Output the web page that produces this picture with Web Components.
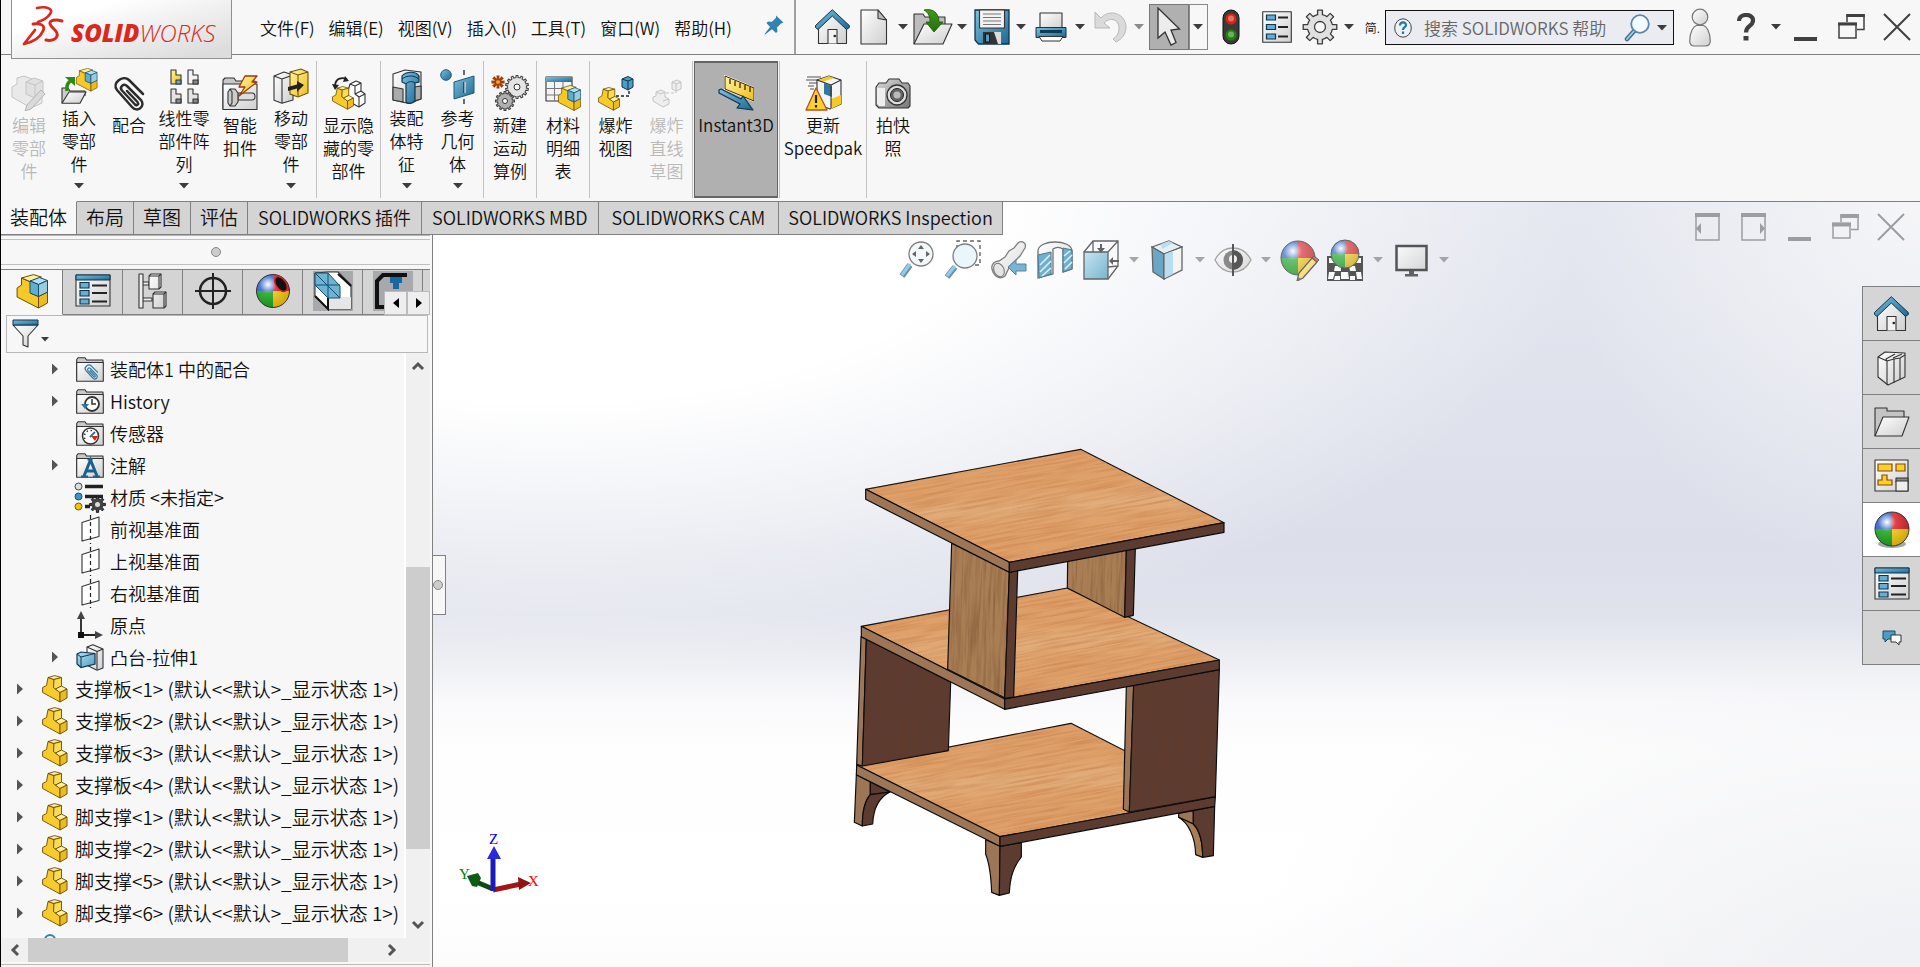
<!DOCTYPE html>
<html lang="zh-CN">
<head>
<meta charset="utf-8">
<title>SOLIDWORKS</title>
<style>
  html, body { margin: 0; height: 100%; }
  body { font: 350 17px/23px "Noto Sans CJK SC", "Noto Sans", sans-serif; color: #111; overflow: hidden; }
</style>
</head>
<body>
<sw-app></sw-app>
<script>
const DEFS = `<defs>
<linearGradient id="b" x1="0" y1="0" x2="1" y2="1"><stop offset="0" stop-color="#7cc0dd"/><stop offset="1" stop-color="#1d6790"/></linearGradient>
<linearGradient id="lb" x1="0" y1="0" x2="1" y2="1"><stop offset="0" stop-color="#b5dff0"/><stop offset="1" stop-color="#4f9dc0"/></linearGradient>
<linearGradient id="g" x1="0" y1="0" x2="1" y2="1"><stop offset="0" stop-color="#fff"/><stop offset="1" stop-color="#cfcfcf"/></linearGradient>
<linearGradient id="dg" x1="0" y1="0" x2="1" y2="1"><stop offset="0" stop-color="#d8d8d8"/><stop offset="1" stop-color="#777"/></linearGradient>
<linearGradient id="y" x1="0" y1="0" x2="1" y2="1"><stop offset="0" stop-color="#fff3a0"/><stop offset="1" stop-color="#f0bd1c"/></linearGradient>
<linearGradient id="gr" x1="0" y1="0" x2="0" y2="1"><stop offset="0" stop-color="#3f9c1a"/><stop offset="1" stop-color="#256d0b"/></linearGradient>
<radialGradient id="bl" cx=".35" cy=".3" r=".75"><stop offset="0" stop-color="#fff"/><stop offset=".35" stop-color="#fff" stop-opacity=".15"/><stop offset="1" stop-color="#000" stop-opacity=".15"/></radialGradient>
</defs>`;

const L = 'stroke="#333" stroke-width="1.1" stroke-linejoin="round"';
const gearPath = (cx, cy, ro, ri, n) => {
  let d = '';
  for (let i = 0; i < n; i++) {
    const a = i * 2 * Math.PI / n, s = Math.PI / n;
    [[-.95, ri], [-.5, ri], [-.36, ro], [.36, ro], [.5, ri]].forEach(([k, r]) => {
      d += (d ? 'L' : 'M') + (cx + r * Math.sin(a + k * s)).toFixed(1) + ' ' + (cy - r * Math.cos(a + k * s)).toFixed(1);
    });
  }
  return d + 'Z';
};
const part = (t = '') => `<g transform="${t}" stroke="#6b4d00" stroke-width=".9" stroke-linejoin="round">
<path fill="#f7cb2a" d="M.6 12.500 4.500 10.500 6 2.500l6 2-.5 8 2 1.500 4.500 3.500V27L.6 17.500z"/>
<path fill="#fff0a0" d="M6 2.500 12.500.6l7 1.900-7.500 2z"/><path fill="#f9dc50" d="M12 4.500l7.500-2V11l-6 3-2-1.500z"/>
<path fill="#fdf0a2" d="M13.500 14l6-3 5.500 3-7 3.500z"/><path fill="#eebb1e" d="M18 17.500 25 14v9l-7 4z"/></g>`;
const asm = (t = '') => `<g transform="${t}" stroke="#6b4d00" stroke-width="1" stroke-linejoin="round">
<path fill="#f7c826" d="M.6 14 5 11V4l9 4v11l8 3.500V34L.6 23z"/><path fill="#fff0a0" d="M5 4 17 .6l8 2.500L13.500 7.500z"/><path fill="#eebb1e" d="M22 22.500 31 18v11l-9 5z"/>
<g stroke="#154c6b"><path fill="#b5dff0" d="M13.500 7 23 3.500l8 3-9 4z"/><path fill="#5faed0" d="M13.500 7l8.500 3.500v12L13.500 19z"/><path fill="#9accdf" d="M22 10.500l9-4V18l-9 4.500z"/></g></g>`;
const ball = (cx, cy, r, t = '') => `<g transform="${t}"><path fill="#2a5fc4" d="M${cx} ${cy}H${cx - r}A${r} ${r} 0 0 1 ${cx} ${cy - r}z"/><path fill="#d8222a" d="M${cx} ${cy}V${cy - r}A${r} ${r} 0 0 1 ${cx + r} ${cy}z"/><path fill="#f2c40f" d="M${cx} ${cy}H${cx + r}A${r} ${r} 0 0 1 ${cx} ${cy + r}z"/><path fill="#19a51e" d="M${cx} ${cy}V${cy + r}A${r} ${r} 0 0 1 ${cx - r} ${cy}z"/><circle cx="${cx}" cy="${cy}" r="${r}" fill="url(#bl)" stroke="#333" stroke-width="1"/></g>`;
const folder = inner => `<path fill="#c9c9c9" ${L} d="M.700 24V2.500L2 .7h7L10.500 3H27v3H.7"/><path fill="url(#g)" ${L} d="M.7 5.500h26.600V24.300H.7z"/>${inner}`;
const plane = `<path fill="#fff" ${L} d="M1 7.500 18 2v19.500L1 26z"/><path stroke="#222" stroke-width="1.200" stroke-dasharray="4 3" d="M9.500 0v29"/>`;
const win = (c, h = 3) => `<g fill="none" stroke="${c}" stroke-width="1.500"><path d="M1 9.500h17V24H1z"/><path d="M9 8V1h17v14.500h-7"/></g><path fill="${c}" d="M0 8.500h19v${h}H0zM8.300 0h18.500v${h}H8.300z"/>`;
const clip = (c, w) => `<path fill="none" stroke="${c}" stroke-width="${w}" stroke-linecap="round" d="M30 18 16 4C10-1.500-1.500 7 4 14l15 17c5 6 14-.5 9-7L14 10c-3.500-3-8 1-5 4.500l13 14c2 2 4-.5 2.500-2.500L14 15"/>`;

const ICONS = {
  down: [10, 6, `<path fill="#3c3c3c" d="M0 0h10L5 5.500z"/>`],
  downSmall: [8, 5, `<path fill="#3c3c3c" d="M0 0h8L4 4.500z"/>`],
  downGrey: [10, 6, `<path fill="#8c8c8c" d="M0 0h10L5 5.500z"/>`],
  right: [6, 12, `<path fill="#555" d="M0 .5v11L6 6z"/>`],
  home: [35, 36, `<path fill="url(#g)" ${L} d="M3.500 16v18.500h28V16L17.300 3z"/><path fill="url(#b)" stroke="#0c3550" d="M.5 16.500 17.300.7 34.300 16.500v2L31.500 20.500 17.300 7 3 20.500.5 18.500z"/><path fill="#f3f3f3" ${L} d="M13 34.500v-14h9v14"/><circle cx="19.800" cy="27" r="1.300" fill="#222"/>`],
  newdoc: [28, 36, `<path fill="url(#g)" ${L} d="M1 1h17l8.500 10v24H1z"/><path fill="#bbb" ${L} d="M18 1v8.500l8.500 1.500z"/>`],
  open: [40, 36, `<path fill="#bdbdbd" ${L} d="M1 35V5h9l2 3h20v10"/><path fill="url(#g)" ${L} d="M1 35 11 15h28L30 35z"/><path fill="url(#gr)" stroke="#1d5508" stroke-width=".8" d="M11 1c9-2 15 3 15 12h4l-9 10-8-10h4c0-5-1-9-6-12z"/>`],
  save: [36, 36, `<path fill="url(#b)" stroke="#0c3550" stroke-width="1.300" d="M1 1h34v34H4.500L1 31z"/><path fill="#f2f2f2" ${L} d="M5.500 1h25v18h-25z"/><path stroke="#777" stroke-width="1.200" d="M9 5h18M9 8.500h18M9 12h18M9 15.500h18"/><path fill="#333" d="M9 23h18v12H9z"/><path fill="#dcdcdc" d="M20 23h7v12h-3z"/><path fill="#4e9cc2" stroke="#111" d="M11.500 25h4v8h-4z"/>`],
  print: [32, 30, `<path fill="url(#g)" ${L} d="M5 17V1h22v16"/><path fill="url(#b)" stroke="#0c3550" d="M1 15.500h30v10H1z"/><path fill="#0e3b55" d="M5 18h22v3H5z"/><path fill="#fff" stroke="#333" d="M4 24.500h24l-3 4.500H7z"/>`],
  undo: [34, 36, `<path fill="#dadada" stroke="#b9b9b9" d="M2 3v16h15l-6-5c7-7 15-3 15 5 0 6-3 9-6 11l3 3c6-3 10-8 10-15C33 5 17-1 8 9z"/>`],
  cursor: [24, 40, `<path fill="#ececec" stroke="#333" stroke-width="1.300" d="M1 1v30l7-6 6 13 5-2.500L14 23l8.500-1z"/>`],
  traffic: [18, 36, `<rect x="1" y="1" width="16" height="34" rx="8" fill="#3a3a3a" stroke="#111"/><circle cx="9" cy="10" r="5.500" fill="#d92410"/><circle cx="9" cy="26" r="5.500" fill="#23820e"/><circle cx="9" cy="9.500" r="3" fill="#fff" opacity=".35"/><circle cx="9" cy="25.500" r="3" fill="#fff" opacity=".35"/>`],
  list: [30, 32, `<path fill="url(#g)" ${L} d="M.7.7h28.600v30.600H.7z"/><g fill="#68add0" stroke="#0c3550" stroke-width="1.200"><path d="M4.500 4h9v5h-9zM4.500 13.500h9v5h-9zM4.500 23h9v5h-9z"/></g><path stroke="#222" stroke-width="1.800" d="M16 6.500h10M16 16h10M16 25.500h10"/>`],
  gear: [36, 36, `<path fill="#e0e0e0" stroke="#3c3c3c" stroke-width="1.300" stroke-linejoin="round" d="${gearPath(18, 18, 17, 12.500, 8)}"/><circle cx="18" cy="18" r="5.500" fill="#f7f7f7" stroke="#3c3c3c" stroke-width="1.300"/>`],
  pin: [20, 20, `<path fill="#2f84b0" d="M12 .5l7.500 7-2.500 1-4 4 .5 4-1.500 1.500L8 14.200 1 19.500.5 19 6 12 2.500 8l1.500-1.500 4 .3 4-4z"/>`],
  glass: [26, 28, `<path stroke="#3c6f95" stroke-width="4.500" stroke-linecap="round" d="M3 25l8-9"/><path stroke="#a9cfe6" stroke-width="1.800" stroke-linecap="round" d="M3 25l7-8"/><circle cx="16" cy="10" r="8.800" fill="#f4fafd" stroke="#5b89a8" stroke-width="1.800"/>`],
  qball: [18, 20, `<ellipse cx="9" cy="10" rx="8.300" ry="9.200" fill="#eef1f3" stroke="#444"/><path fill="none" stroke="#2277a5" stroke-width="2.200" d="M6 7.500c0-4 6-4 6-.5 0 2.500-3 2-3 5M9 13.500v2.500"/>`],
  person: [22, 39, `<circle cx="11" cy="9" r="7.800" fill="url(#g)" stroke="#777" stroke-width="1.200"/><path fill="url(#g)" stroke="#777" stroke-width="1.200" d="M.7 33c0-9 4-15 7-15.500h6.600c3 .5 7 6.500 7 15.500 0 3-2 5-5 5H5.500c-3 0-4.800-2-4.800-5z"/>`],
  help: [18, 28, `<path fill="none" stroke="#404040" stroke-width="4.200" d="M2 8C2 0 16 0 16 7.500c0 6-7 5-7 12"/><path fill="#404040" d="M6.500 23h5v4.500h-5z"/>`],
  min: [23, 28, `<path fill="#404040" d="M0 24h23v4H0z"/>`],
  restore: [27, 26, win('#404040')],
  close: [28, 28, `<path stroke="#404040" stroke-width="2" d="M1 1l26 26M27 1 1 27"/>`],
  minG: [23, 28, `<path fill="#9b9da3" d="M0 24h23v4H0z"/>`],
  restoreG: [27, 26, win('#9b9da3', 4)],
  closeG: [28, 28, `<path stroke="#9b9da3" stroke-width="2" d="M1 1l26 26M27 1 1 27"/>`],
  paneL: [25, 28, `<path fill="none" stroke="#9b9da3" stroke-width="1.500" d="M1 1h23v26H1z"/><path fill="#9b9da3" d="M0 0h25v4H0zM6 10v11L1 15.500z"/>`],
  paneR: [25, 28, `<path fill="none" stroke="#9b9da3" stroke-width="1.500" d="M1 1h23v26H1z"/><path fill="#9b9da3" d="M0 0h25v4H0zM19 10v11l5-5.500z"/>`],

  editPart: [36, 36, `<g stroke="#c4c4c4" fill="#e9e9e9" stroke-linejoin="round"><path d="M1 12 6 9V3l7-2 8 3v10l10 4v10l-11 5L1 22z"/><path fill="#e0e0e0" d="M15 7l8-4 9 3v13l-8 4-9-4z"/><path fill="none" d="M15 7l9 3v13M24 10l8-4"/><path fill="#dadada" stroke="#b2b2b2" d="M30 15l4 4-14 15-6 2 2-6z"/></g>`],
  insert: [37, 36, asm('translate(15 0) scale(.68)') + `<path fill="#ccc" ${L} d="M1 35V20h6l2 3h15v5"/><path fill="url(#g)" ${L} d="M1 35.300 8 24h17l-6 11.300z"/><path fill="none" stroke="#2f8a10" stroke-width="3.500" d="M6 23c-1-6 1-9 5-11"/><path fill="#2f8a10" d="M4 9h10v9z"/>`],
  clip: [32, 35, clip('#2c2c2c', 2.500)],
  pattern: [29, 35, [[0, 0, 'url(#y)', '#55b0dc'], [17, 0, '#f4f4f4', '#888'], [0, 19, '#e4e4e4', '#888'], [17, 19, '#e4e4e4', '#888']].map(([x, y, a, b]) => `<g transform="translate(${x} ${y})"><path fill="${a}" ${L} d="M1 1h5v5h5v9H1z"/><path fill="${b}" ${L} d="M6 11h5v4H6z"/></g>`).join('')],
  smart: [36, 36, `<path fill="#c9c9c9" ${L} d="M1 34V5l2-2h9l2 3h19v6"/><path fill="url(#g)" ${L} d="M1 9h34v25.500H1z"/><path fill="#ddd" ${L} d="M16 18h14q3 0 3 3.500T30 25H16z"/><path fill="#ccc" ${L} d="M8 14h5l3 4v9l-3 4H8l-2-3V17z"/><path fill="none" ${L} d="M8 14l2 3v11l-2 3"/><path fill="url(#y)" stroke="#9c3a00" stroke-width="1.300" stroke-linejoin="round" d="M23 1h12l-5 6h5L17 21l6-9h-6z"/>`],
  move: [36, 36, `<path fill="url(#g)" ${L} d="M1 8 11 4l9 3v25L9 35.300l-8-3z"/><path fill="none" ${L} d="M1 8l8 3 11-4M9 11v24"/><path fill="url(#y)" stroke="#6b4d00" stroke-width="1.100" d="M17 4 28 1l7 3v21l-10 4-8-3z"/><path fill="none" stroke="#6b4d00" d="M17 4l8 3 10-3M25 7v21"/><path fill="#222" d="M15 19l9-2.500V13l7 4-7 7v-3.500L15 23z"/>`],
  hidden: [34, 35, `<g fill="#fff" ${L}><path d="M16 15 18 8l6-3 5 2v8l4 3v9l-6 4-11-6z"/><path fill="none" d="M18 8l5 2 6-3M23 10v8l4 3 6-3M27 21v10M23 18l6-3"/></g>` + part('translate(0 10) scale(.86)') + `<path fill="none" stroke="#222" stroke-width="1.800" d="M3 9c1-7 7-8 12-6"/><path fill="#222" d="M0 8l7 1-4 5zM13 0l4 5-6 1z"/>`],
  feature: [30, 35, `<path fill="url(#g)" ${L} d="M1 5 13 1l16 2v27l-12 4.500L1 31z"/><path fill="#aaa" ${L} d="M1 18l10 2v13L1 31zM22 18l7-1v13l-7 2z"/><path fill="url(#b)" stroke="#0c3550" stroke-width="1.200" d="M10 13V7c4-5 14-5 17 0v6l-4 1v18c-3 3-7 3-9 1V15z"/><path fill="none" stroke="#0c3550" d="M10 10c5-4 12-4 17 0M14 15c2-3 7-3 9-1"/>`],
  refgeo: [35, 35, `<circle cx="6" cy="6" r="5.300" fill="url(#b)" stroke="#1b5c80"/><path fill="url(#b)" stroke="#1b5c80" d="M14 13l20-6v17l-20 6z"/><path stroke="#222" stroke-width="1.300" d="M24 1v5M24 13v11M24 30v5"/><path stroke="#fff" stroke-width="1" d="M25 13v11"/>`],
  motion: [38, 36, `<path fill="#e4e4e4" stroke="#444" stroke-width="1.100" d="${gearPath(26, 12, 11.500, 9.500, 14)}"/><circle cx="26" cy="12" r="3" fill="#fff" stroke="#333"/><path fill="#b0b0b0" stroke="#444" stroke-width="1.100" d="${gearPath(14, 26, 9.500, 7.500, 12)}"/><circle cx="14" cy="26" r="2.500" fill="#fff" stroke="#333"/><path fill="#f4a11c" stroke="#a23f08" stroke-width="1.400" d="${gearPath(7, 7, 6, 2.700, 8)}"/>`],
  bom: [36, 35, `<path fill="#f4f4f4" ${L} d="M1 1h26v24H1z"/><path fill="url(#b)" d="M1 1h26v5H1z"/><path fill="none" stroke="#777" d="M1 12.500h26M1 19h26M9.500 6v19M18 6v19"/>` + asm('translate(13 9) scale(.73 .75)')],
  explode: [36, 35, part('translate(0 11) scale(.86)') + `<g stroke="#0c3550" fill="#4e9cc2"><path d="M24 3l6-2.500L35 3v8l-5 3-6-3z"/><path fill="none" d="M24 3l6 2 5-2M30 5v9"/></g><path fill="none" stroke="#222" stroke-width="1.400" stroke-dasharray="3 2" d="M31 15v5H18"/>`],
  explodeLine: [30, 29, `<g fill="#eee" stroke="#c4c4c4"><path d="M1 18l3-1v-4l5-2 4 2v5l4 2v5l-6 3-10-6z"/><path d="M20 3l5-2 4 2v7l-5 2-4-2z"/><path fill="none" d="M20 3l4 2 5-2M24 5v7M4 13l4 2 5-2M11 22l6-2" /><path fill="none" stroke-dasharray="3 2" d="M14 14h10v-2"/></g>`],
  instant: [36, 36, `<path fill="url(#y)" stroke="#fff" stroke-width="2" d="M7 1l29 12v13L7 14z"/><path fill="url(#y)" stroke="#3a2c00" d="M7 1l29 12v13L7 14z"/><path stroke="#3a2c00" stroke-width="1.300" d="M12 4v5M17 6v5M22 8v5M27 10v5M32 12v5"/><path fill="url(#b)" stroke="#0c3550" stroke-width="1.200" stroke-linejoin="round" d="M1 15l2-1 20 10 2-3 10 14-16-2 3-4L1 18z"/>`],
  speedpak: [37, 36, `<path stroke="#555" stroke-width="1.200" d="M2 2h14M1 5h12M4 8h10M3 11h6M5 14h4"/><path fill="#f4f4f4" ${L} d="M12 5 24 1l12 4v24l-11 5-13-5z"/><path fill="#f7c826" d="M13 5l11-4 5 2-12 4zM26 24l10-4v9l-10 5z"/><path fill="#2f78a0" d="M19 8l8 3v11l-8-3z"/><path fill="none" ${L} d="M12 5l14 5 10-5M26 10v23"/><path fill="#ffd02e" stroke="#b3541d" stroke-width="1.300" stroke-linejoin="round" d="M11 13 1 35h21z"/><path stroke="#222" stroke-width="2.200" d="M11 20v8M11 30v2.500"/>`],
  camera: [36, 31, `<path fill="url(#dg)" ${L} d="M1 9l3-4h7l3-4h10l3 4h6l2 3v20l-2 2H4l-3-3z"/><path fill="#eee" d="M2 10h8v18H4l-2-2z"/><circle cx="22" cy="17" r="10" fill="#ddd" stroke="#333" stroke-width="1.300"/><circle cx="22" cy="17" r="6.500" fill="#666" stroke="#222"/><circle cx="22" cy="17" r="3.500" fill="#bbb"/>`],

  asmTab: [32, 36, asm('translate(.5 1)')],
  props: [36, 33, `<path fill="url(#g)" ${L} d="M1 1h34v31H1z"/><path fill="url(#b)" stroke="#0c3550" d="M1 1h34v5H1z"/><g fill="#68add0" stroke="#0c3550" stroke-width="1.200"><path d="M5 8.500h9v5.500H5zM5 16.500h9V22H5zM5 25h9v5H5z"/></g><path stroke="#222" stroke-width="1.800" d="M17 11.500h15M17 19h15M17 27.500h15"/>`],
  config: [29, 36, `<path fill="#eee" ${L} d="M1 1h4v34H1zM5 9h6v3H5zM5 25h9v3H5z"/><path fill="url(#g)" ${L} d="M11 3l2-2h10v13l-2 2H11zM15 21l2-2h11v14l-2 2H15z"/><path fill="none" ${L} d="M11 3h10v13M21 3l2-2M15 21h11v14M26 21l2-2"/>`],
  target: [36, 36, `<circle cx="18" cy="18" r="13" fill="none" stroke="#222" stroke-width="2.500"/><path stroke="#222" stroke-width="2" d="M18 0v36M0 18h36"/>`],
  ballTab: [36, 36, ball(18, 18, 16.500) + `<ellipse cx="26" cy="11" rx="5" ry="8.500" transform="rotate(-35 26 11)" fill="#111" stroke="#d8222a" stroke-width="1.500"/>`],
  cubeTab: [40, 40, `<path fill="#a8a9ad" d="M0 0h40v40H0z"/><path fill="#fff" ${L} d="M15 1h10l13 13v24H15L2 25V2z"/><path fill="#e6e6e6" d="M15 26h23v12H15z"/><path stroke="#111" stroke-width="2" d="M25 3l13 12M2 25l13 13V27"/><path fill="#6fb2d2" stroke="#0c5278" d="M2 2h13l12 13v12H15L2 14z"/><path fill="none" stroke="#0c5278" d="M2 2l25 25M15 2v25M2 14h25"/>`],
  cam: [40, 40, `<path fill="#a8a9ad" d="M0 0h40v40H0z"/><path fill="none" stroke="#111" stroke-width="4" d="M34 4H10L4 10v26h10"/><path fill="#1668a0" d="M17 6h12v6h-3v6h-6v-6h-3z"/>`],
  funnel: [27, 29, `<path fill="url(#g)" ${L} d="M1 6l10 11v9l5 2V17L26 6z"/><path fill="url(#b)" stroke="#0c3550" d="M1 1h25v5H1z"/>`],
  tMate: [28, 25, folder(`<g transform="translate(8 7) scale(.45)">${clip('#2c78a4', 2.600)}</g>`)],
  tHist: [28, 25, folder(`<circle cx="16" cy="15" r="7" fill="#fff" stroke="#333" stroke-width="1.800"/><path fill="none" stroke="#333" stroke-width="1.500" d="M16 10v5h4"/><path fill="#2c78a4" d="M5 15h8l-4 5z"/>`)],
  tSens: [28, 25, folder(`<circle cx="14.500" cy="15" r="8" fill="#fff" stroke="#333" stroke-width="1.500"/><path fill="#d9261c" d="M15 15l7 0-3 5z"/><path stroke="#2c78a4" stroke-width="2" d="M14 16l5-5"/><path stroke="#333" stroke-dasharray="1.500 2.500" stroke-width="1.500" fill="none" d="M9 18a6 6 0 0 1 8-8"/>`)],
  tNote: [28, 25, folder(`<path fill="none" stroke="#17628f" stroke-width="3" d="M8 23l6.500-16L21 23M10 18h9"/><path stroke="#17628f" stroke-width="2" d="M5 23.500h7M17 23.500h7M11.500 6.500h5"/>`)],
  tMat: [32, 31, `<circle cx="4.500" cy="4.500" r="3.500" fill="#ddd" stroke="#444"/><circle cx="4.500" cy="14.500" r="3.500" fill="#3c96c2" stroke="#15506f"/><circle cx="4.500" cy="24.500" r="3.500" fill="#f2c40f" stroke="#7c5c00"/><path stroke="#222" stroke-width="3.500" d="M11 4.500h18M11 14.500h18M11 24.500h5"/><path fill="#444" stroke="#222" d="${gearPath(23.500, 22.500, 8, 5.500, 8)}"/><circle cx="23.500" cy="22.500" r="2.500" fill="#ddd"/>`],
  tPlane: [19, 29, plane],
  tOrigin: [28, 28, `<path stroke="#222" stroke-width="1.800" d="M5 4v20h17"/><path fill="#444" d="M5 0l4 8H1zM27 24l-8-4v8z"/><path fill="#111" d="M2 21h6v6H2z"/>`],
  tBoss: [28, 27, `<path fill="url(#g)" ${L} d="M11 3 17 .7 27 5v19l-6 2.300-10-5z"/><path fill="none" ${L} d="M11 3l10 4.500L27 5M21 7.500v18"/><path fill="url(#lb)" stroke="#0c3550" stroke-width="1.200" d="M1 10l4-2 14 1.500V20L5 23.500 1 20z"/><path fill="none" stroke="#0c3550" d="M1 10l4 3 14-3.500M5 13v10"/>`],
  tPart: [26, 28, part()],
  tRings: [24, 22, `<circle cx="7" cy="6" r="5" fill="none" stroke="#2c84b0" stroke-width="2"/><circle cx="18" cy="10" r="5" fill="none" stroke="#2c84b0" stroke-width="2"/>`],

  zoomFit: [36, 38, `<path stroke="#2b6a8b" stroke-width="6" d="M3 35l8-11"/><path stroke="#76b7d6" stroke-width="3.500" d="M3 34l8-11"/><circle cx="22" cy="13" r="12" fill="#eff6fa" stroke="#555" stroke-width="1.300"/><path fill="#333" d="M22 4l3 4h-6zM22 22l3-4h-6zM13 13l4-3v6zM31 13l-4-3v6z"/>`],
  zoomArea: [38, 40, `<path fill="none" stroke="#333" stroke-width="1.400" stroke-dasharray="4 3" d="M13 9V1h23v24h-7"/><path stroke="#2b6a8b" stroke-width="6" d="M3 37l8-10"/><path stroke="#76b7d6" stroke-width="3.500" d="M3 36l8-10"/><circle cx="21" cy="16" r="12" fill="#e4f2fb" stroke="#555" stroke-width="1.300"/>`],
  prevView: [36, 38, `<path fill="url(#g)" stroke="#555" stroke-width="1.300" d="M1 28c-1-4 2-8 7-8l6-4 4-6 5-3 4-5c4-3 9 0 7 5l-5 8-4 4-6 6-5 10c-5 4-11 1-13-7z"/><ellipse cx="8" cy="29" rx="5" ry="7" transform="rotate(-25 8 29)" fill="#ddd" stroke="#444"/><path fill="#4e9cc2" stroke="#1b5c80" d="M17 26l8-7v4h10v7H25v4z"/>`],
  section: [36, 38, `<path fill="url(#g)" stroke="#444" stroke-width="1.300" d="M1 10C1-2 35-2 35 10v18l-9 3V8c-3-2-7-2-10 0v25L1 37z"/><path fill="#3f97c2" stroke="#154c6b" d="M1 14l13-3v22L2 37zM26 7l9 2v19l-9 3z"/><path stroke="#d9eef8" stroke-width="1.500" d="M3 24l10-10M3 31l11-11M5 35l9-8M27 15l6-5M27 22l8-8M28 28l7-7"/>`],
  orient: [36, 40, `<path fill="none" stroke="#333" stroke-width="1.300" d="M1 12 10 1h25v25L25 39M25 12 35 1M10 1v11M25 27l10-1"/><path fill="url(#lb)" stroke="#333" stroke-width="1.300" d="M1 12h24v27H1z"/><path fill="#333" d="M17 4h2v4h3l-4 5-4-5h3zM36 20v2h-6v3l-4-4 4-4v3z"/>`],
  display: [32, 40, `<path fill="#ddeff7" stroke="#333" stroke-width="1.300" d="M1 7 18 1l13 6-18 7z"/><path fill="#3c8db5" stroke="#333" stroke-width="1.300" d="M1 7l12 7v25L2 32z"/><path fill="#f4f4f4" stroke="#333" stroke-width="1.300" d="M13 14l18-7v23l-18 9z"/><path fill="#a6d5ec" d="M14 14l8-3v23l-8 4zM10 4l8-3 4 2-11 6z"/>`],
  eye: [38, 32, `<path fill="url(#g)" stroke="#888" stroke-width="1.300" d="M1 16c8-16 28-16 36 0-8 16-28 16-36 0z"/><circle cx="19" cy="16" r="9.500" fill="#666"/><path fill="#222" d="M19 6a10 10 0 0 1 0 20z"/><circle cx="19" cy="15" r="4" fill="#eee"/><path stroke="#222" stroke-width="2" d="M19 0v32"/>`],
  appear: [39, 42, ball(18, 19, 17) + `<path fill="url(#y)" stroke="#333" stroke-width="1.200" d="M32 19l5 4-14 16-6 3 2-8z"/><path fill="#d9434a" stroke="#333" d="M32 19l2-2 5 4-2 2z"/><path fill="#555" d="M17 42l1-4 3 2z"/>`],
  scene: [36, 42, `<path fill="#222" d="M0 17h36v25H0z"/><path fill="#fff" d="M2 19h5v5H2zM29 19h5v5h-5zM2 33h6l-2 7H1zM14 33h7l1 7h-8zM29 33h5l1 7h-5zM8 27h6v5H7zM22 27h6l1 5h-6zM8 37h5v4H7zM23 37h5v4h-5z"/>` + ball(18, 15, 14)],
  monitor: [33, 33, `<path fill="url(#g)" stroke="#222" stroke-width="2.500" d="M1.500 2h30v24h-30z"/><path fill="#333" d="M14 27h5v3h4v2.500H10V30h4z"/>`],

  books: [30, 36, `<g fill="url(#g)" ${L}><path d="M1 7 8 2l20 1v24L11 35 1 27z"/><path d="M1 7l9 4v24M10 11l7-2v24M17 9l6-1v22M23 8l5-3M10 11l-1-2 9-5M16 8l9-4" fill="none"/></g>`],
  folderP: [36, 30, `<path fill="#c4c4c4" ${L} d="M1 29V1h12v3h17v6"/><path fill="url(#g)" ${L} d="M1 29l8-19h26l-7 19z"/>`],
  palette: [35, 33, `<path fill="url(#g)" ${L} d="M1 1h33v31H1z"/><g fill="#f9cf2c" stroke="#8a4b00" stroke-width="1.200"><path d="M4 5h14v7H4zM22 5h9v7h-9zM4 26v-5h4v-5h5v5h5v5z"/></g><path fill="#888" ${L} d="M22 19h12v4H22z"/><path fill="#eee" ${L} d="M22 22h12v10H22z"/>`],
  ballPane: [36, 38, `<ellipse cx="18" cy="33" rx="14" ry="4" fill="#000" opacity=".35"/>` + ball(18, 18, 17)],
  chat: [20, 16, `<path fill="#4e9cc2" stroke="#154c6b" d="M1 1h12v8H6l-3 3V9H1z"/><path fill="#fff" stroke="#333" d="M9 5h10v7h-2v3l-3-3H9z"/>`]
};

/* Base class: every component owns an open shadow root filled from its markup. */
class Base extends HTMLElement {
  connectedCallback() {
    if (this.shadowRoot) return;
    const t = document.createElement('template');
    t.innerHTML = this.render();
    this.attachShadow({ mode: 'open' }).append(t.content.cloneNode(true));
  }
  at(n, d = '') { return this.getAttribute(n) ?? d; }
}
const BTN = `button{font:inherit;color:inherit;background:none;border:0;padding:0;margin:0}`;
const define = (name, render) => customElements.define(name, class extends Base { render() { return render(this); } });

define('sw-icon', el => {
  const [w, h, body] = ICONS[el.at('name')];
  return `<style>:host{display:block;flex:none}svg{display:block}</style>
  <svg width="${w}" height="${h}" viewBox="0 0 ${w} ${h}" fill="none" aria-hidden="true">${body.includes('url(#') ? DEFS : ''}${body}</svg>`;
});

define('sw-tool', el => `<style>${BTN}
  :host{display:flex;flex:none;height:46px;align-items:stretch}
  button{display:grid;place-items:center;width:var(--tool-w,40px)}
  .m{width:var(--menu-w,19px)}
  :host([wide]) .t{width:46px}
  :host([on]) .t{background:#b0b0b0;outline:1px solid #777;outline-offset:-1px}
  :host([on]) .m{outline:1px solid #888;outline-offset:-1px}
  </style>
  <button class="t" type="button" aria-label="${el.at('label')}"><sw-icon name="${el.at('icon')}"></sw-icon></button>
  ${el.hasAttribute('menu') ? `<button class="m" type="button" aria-label="${el.at('label')} 选项"><sw-icon name="${el.at('menu') || 'down'}"></sw-icon></button>` : ''}`);

define('sw-logo', () => `<style>
  :host{display:flex;flex:none;box-sizing:border-box;width:221px;height:59px;margin:0 0 -4px 10px;align-self:flex-start;position:relative;z-index:2;
   align-items:center;gap:7px;padding:8px 0 0 10px;border:1px solid #8f8f8f;border-top:0;background:linear-gradient(165deg,#fff 25%,#ddd 90%);color:#da291c}
  svg{display:block;margin-top:-14px}
  p{margin:0;font:italic 300 24px/24px "Open Sans",sans-serif}
  b{font-weight:800}
  </style>
  <svg width="42" height="40" viewBox="0 0 42 40" fill="none" stroke="#da291c" stroke-linecap="round" stroke-linejoin="round" aria-hidden="true">
   <path stroke-width="2.600" d="M15 2c10-2 17 1 13 6-2 3-6 6-12 8"/>
   <path stroke-width="2.800" d="M11 18c7-1 13 1 10 7-3 7-10 11-19 13l11-14"/>
   <path stroke-width="3" d="M40 15c-6-2-13-1-12 3 1 4 9 7 7 12-1 4-7 5-11 4"/>
  </svg><p><b>SOLID</b>WORKS</p>`);

define('sw-search', () => `<style>${BTN}
  :host{display:flex;flex:1 1 0;min-width:200px;height:35px;box-sizing:border-box;align-items:center;border:1px solid #111;background:#eaecf1;padding-left:8px}
  input{flex:1;min-width:0;border:0;outline:0;background:none;font:inherit;color:#666;padding:0 0 0 12px}
  input::placeholder{color:#666;opacity:1}
  button{display:grid;place-items:center;height:100%;width:26px}
  .m{width:23px}
  label{display:contents}
  </style>
  <label><sw-icon name="qball"></sw-icon><input type="text" aria-label="搜索帮助" placeholder="搜索 SOLIDWORKS 帮助"></label>
  <button type="button" aria-label="搜索"><sw-icon name="glass"></sw-icon></button>
  <button class="m" type="button" aria-label="搜索选项"><sw-icon name="down"></sw-icon></button>`);

define('sw-titlebar', () => `<style>${BTN}
  :host{display:flex;height:54px;align-items:flex-start;background:#f7f7f7;border-bottom:1px solid #808080}
  nav{display:flex;gap:14px;margin-left:28px;padding-top:16px}
  .pin{margin:15px 0 0 32px}
  .tools{display:flex;flex:1;min-width:0;height:54px;margin-left:10px;border-left:2px solid #a0a0a0;padding:4px 0 0 16px;box-sizing:border-box}
  .home{--tool-w:42px}
  .help{--tool-w:46px;--menu-w:13px}
  .more{margin:12px 5px 0 6px;white-space:nowrap;font-size:12px}
  sw-search{margin-top:6px}
  .end{display:flex;padding-left:3px}
  </style>
  <sw-logo></sw-logo>
  <nav aria-label="菜单">${['文件(F)', '编辑(E)', '视图(V)', '插入(I)', '工具(T)', '窗口(W)', '帮助(H)'].map(t => `<button type="button">${t}</button>`).join('')}</nav>
  <button class="pin" type="button" aria-label="固定菜单"><sw-icon name="pin"></sw-icon></button>
  <div class="tools">
   <sw-tool class="home" icon="home" label="主页"></sw-tool><sw-tool icon="newdoc" label="新建" menu></sw-tool><sw-tool icon="open" label="打开" menu></sw-tool>
   <sw-tool icon="save" label="保存" menu></sw-tool><sw-tool icon="print" label="打印" menu></sw-tool><sw-tool icon="undo" label="撤销" menu="downGrey"></sw-tool>
   <sw-tool icon="cursor" label="选择" menu on></sw-tool><sw-tool icon="traffic" label="重建" wide></sw-tool><sw-tool icon="list" label="文件属性" wide></sw-tool>
   <sw-tool icon="gear" label="设置" menu></sw-tool><span class="more">简.</span>
   <sw-search></sw-search>
   <div class="end"><sw-tool icon="person" label="登录" wide></sw-tool><sw-tool class="help" icon="help" label="帮助" menu></sw-tool>
   <sw-tool icon="min" label="最小化" wide></sw-tool><sw-tool icon="restore" label="还原" wide></sw-tool><sw-tool icon="close" label="关闭" wide></sw-tool></div>
  </div>`);

define('sw-command', el => `<style>${BTN}
  :host{display:block;flex:none}
  button{display:flex;flex-direction:column;align-items:center;box-sizing:border-box;height:137px;width:var(--cmd-w,51px);padding-top:14px;white-space:nowrap}
  .i{display:grid;place-items:center;height:36px;margin-bottom:2px}
  .l{display:block}
  .m{margin-top:8px}
  :host([menu]) button{padding-top:7px}
  :host([disabled]){color:#b9b9b9}
  :host([on]) button{background:#b0b0b0;border:2px solid #666;border-width:2px 1px;padding-top:12px}
  </style>
  <button type="button"${el.hasAttribute('disabled') ? ' disabled' : ''}${el.hasAttribute('on') ? ' aria-pressed="true"' : ''}><span class="i"><sw-icon name="${el.at('icon')}"></sw-icon></span>
  ${el.at('label').split('|').map(s => `<span class="l">${s}</span>`).join('')}
  ${el.hasAttribute('menu') ? '<sw-icon class="m" name="down"></sw-icon>' : ''}</button>`);

define('sw-ribbon-group', () => `<style>:host{display:flex;border-right:1px solid #c2c2c2}</style><slot></slot>`);

define('sw-ribbon', () => `<style>
  :host{display:flex;background:#f7f7f7;border-bottom:1px solid #808080;padding:6px 0 3px 3px;height:137px}
  .w50{--cmd-w:50px}.w52{--cmd-w:52px}.w60{--cmd-w:60px}.w63{--cmd-w:63px}.w84{--cmd-w:84px}.w86{--cmd-w:86px}
  .pad{padding:0 1px}
  .last{border:0}
  </style>
  <sw-ribbon-group><sw-command class="w50" icon="editPart" label="编辑|零部|件" disabled></sw-command><sw-command class="w50" icon="insert" label="插入|零部|件" menu></sw-command>
   <sw-command class="w50" icon="clip" label="配合"></sw-command><sw-command class="w60" icon="pattern" label="线性零|部件阵|列" menu></sw-command>
   <sw-command class="w52" icon="smart" label="智能|扣件"></sw-command><sw-command class="w50" icon="move" label="移动|零部|件" menu></sw-command></sw-ribbon-group>
  <sw-ribbon-group><sw-command class="w63" icon="hidden" label="显示隐|藏的零|部件"></sw-command></sw-ribbon-group>
  <sw-ribbon-group><sw-command icon="feature" label="装配|体特|征" menu></sw-command><sw-command icon="refgeo" label="参考|几何|体" menu></sw-command></sw-ribbon-group>
  <sw-ribbon-group><sw-command class="w52" icon="motion" label="新建|运动|算例"></sw-command></sw-ribbon-group>
  <sw-ribbon-group><sw-command class="w52" icon="bom" label="材料|明细|表"></sw-command></sw-ribbon-group>
  <sw-ribbon-group><sw-command icon="explode" label="爆炸|视图"></sw-command><sw-command icon="explodeLine" label="爆炸|直线|草图" disabled></sw-command></sw-ribbon-group>
  <sw-ribbon-group class="pad"><sw-command class="w84" icon="instant" label="Instant3D" on></sw-command></sw-ribbon-group>
  <sw-ribbon-group><sw-command class="w86" icon="speedpak" label="更新|Speedpak"></sw-command></sw-ribbon-group>
  <sw-ribbon-group class="last"><sw-command class="w52" icon="camera" label="拍快|照"></sw-command></sw-ribbon-group>`);

define('sw-tabs', () => `<style>${BTN}
  :host{display:flex;align-self:start;justify-self:start;position:relative;z-index:1;margin-top:-1px}
  button{box-sizing:border-box;height:34px;padding:0 9px 2px;border:1px solid #808080;border-left-width:0;background:#d4d4d4;font-size:19px;line-height:28px;white-space:nowrap}
  button[aria-selected=true]{background:#f7f7f7;border-top-color:#f7f7f7}
  .w,.x,.n{font-size:18px;padding:0 10px 2px}
  .x{padding:0 13px 2px}
  .n{padding:0 9px 2px}
  </style>
  ${[['装配体'], ['布局'], ['草图'], ['评估'], ['SOLIDWORKS 插件', 'w'], ['SOLIDWORKS MBD', 'w'], ['SOLIDWORKS CAM', 'x'], ['SOLIDWORKS Inspection', 'n']].map(([t, c], i) => `<button type="button" role="tab" class="${c || ''}" aria-selected="${i === 0}">${t}</button>`).join('')}`);

define('sw-tree-item', el => `<style>${BTN}
  :host{display:flex;height:32px;align-items:center;white-space:nowrap;font-size:19px;line-height:26px;box-sizing:border-box;padding-left:12px}
  :host([deep]){padding-left:47px;font-size:18px}
  .x{width:13px;height:20px;display:grid;place-items:center}
  .i{width:32px;display:grid;place-items:center;margin:0 4px 0 13px}
  </style>
  ${el.hasAttribute('leaf') ? '<span class="x"></span>' : '<button class="x" type="button" aria-label="展开"><sw-icon name="right"></sw-icon></button>'}
  <span class="i"><sw-icon name="${el.at('icon')}"></sw-icon></span><slot></slot>`);

define('sw-panel', () => {
  const deep = [['tMate', '装配体1 中的配合'], ['tHist', 'History'], ['tSens', '传感器', 1], ['tNote', '注解'], ['tMat', '材质 &lt;未指定&gt;', 1], ['tPlane', '前视基准面', 1], ['tPlane', '上视基准面', 1], ['tPlane', '右视基准面', 1], ['tOrigin', '原点', 1], ['tBoss', '凸台-拉伸1']];
  const parts = ['支撑板&lt;1&gt;', '支撑板&lt;2&gt;', '支撑板&lt;3&gt;', '支撑板&lt;4&gt;', '脚支撑&lt;1&gt;', '脚支撑&lt;2&gt;', '脚支撑&lt;5&gt;', '脚支撑&lt;6&gt;'];
  const chev = (d, l) => `<button type="button" aria-label="${l}"><svg width="14" height="14" viewBox="0 0 14 14" fill="none" stroke="#555" stroke-width="3"><path d="${d}"/></svg></button>`;
  return `<style>${BTN}
  :host{display:flex;flex-direction:column;min-height:0;background:#f7f7f7;border-right:1px solid #808080;padding-right:2px}
  svg{display:block}
  .grip{flex:none;height:24px;margin-top:3px;border:1px solid #c0c0c0;border-width:1px 0;display:grid;place-items:center}
  .top{flex:none;height:1px;background:#a3bcc2}
  .dot{width:8px;height:8px;border:1px solid #888;border-radius:50%;background:#ccc}
  .tabs{flex:none;display:flex;height:46px;margin-top:4px;position:relative;overflow:hidden}
  .tabs>button{flex:none;box-sizing:border-box;width:60px;border:1px solid #808080;border-left-width:0;background:#d4d4d4;display:grid;place-items:center;padding-bottom:3px}
  .tabs>button:first-child{width:62px;background:#f7f7f7;border-bottom-color:#f7f7f7}
  .tabs>button:last-of-type{border-right-width:0}
  .scroll{position:absolute;right:0;bottom:0;display:flex}
  .scroll button{width:23px;height:24px;display:grid;place-items:center;background:#eee;border:1px solid #bbb}
  .filter{flex:none;display:flex;align-items:center;box-sizing:border-box;height:38px;margin:0 2px 0 5px;border:1px solid #b8b8b8;padding:0 0 2px 5px}
  .filter .a{margin:12px 0 0 2px}
  .filter input{flex:1;min-width:0;border:0;outline:0;background:none;font:inherit;margin-left:6px}
  .mid{flex:1;min-height:0;display:flex}
  .tree{flex:1;min-width:0;overflow:hidden;border-right:2px solid #fff}
  .v{flex:none;width:24px;background:#f0f0f0;display:flex;flex-direction:column}
  .v button{height:26px;width:24px;display:grid;place-items:center}
  .v .rail{flex:1;display:flex;flex-direction:column}
  .v .rail::before{content:"";flex:187}
  .v .rail i{flex:281;background:#cdcdcd}
  .v .rail::after{content:"";flex:63}
  .h{flex:none;height:24px;display:flex;background:#f0f0f0}
  .h button{height:24px;width:27px;display:grid;place-items:center}
  .h .rail{flex:1;display:flex}
  .h .rail i{flex:321;background:#cdcdcd}
  .h .rail::after{content:"";flex:30}
  .h::after{content:"";width:25px}
  .foot{flex:none;height:1px;margin:2px 0;background:#bbb}
  </style>
  <div class="top"></div><div class="grip"><span class="dot"></span></div>
  <div class="tabs" role="tablist">${[['asmTab', '设计树'], ['props', '属性'], ['config', '配置'], ['target', '尺寸专家'], ['ballTab', '外观'], ['cubeTab', '加工特征树'], ['cam', '加工操作树'], ['', '更多']].map(([i, l], n) => `<button type="button" role="tab" aria-label="${l}" aria-selected="${n === 0}">${i ? `<sw-icon name="${i}"></sw-icon>` : ''}</button>`).join('')}
   <div class="scroll"><button type="button" aria-label="向左"><svg width="6" height="10"><path d="M6 0v10L0 5z"/></svg></button><button type="button" aria-label="向右"><svg width="6" height="10"><path d="M0 0v10l6-5z"/></svg></button></div></div>
  <label class="filter"><sw-icon name="funnel"></sw-icon><sw-icon class="a" name="downSmall"></sw-icon><input type="text" aria-label="过滤"></label>
  <div class="mid"><div class="tree">
   ${deep.map(([i, t, l]) => `<sw-tree-item deep icon="${i}"${l ? ' leaf' : ''}>${t}</sw-tree-item>`).join('')}
   ${parts.map(t => `<sw-tree-item icon="tPart">${t} (默认&lt;&lt;默认&gt;_显示状态 1&gt;)</sw-tree-item>`).join('')}
   <sw-tree-item icon="tRings" leaf></sw-tree-item></div>
   <div class="v">${chev('M2 10l5-5 5 5', '向上滚动')}<div class="rail"><i></i></div>${chev('M2 4l5 5 5-5', '向下滚动')}</div></div>
  <div class="h">${chev('M10 2 5 7l5 5', '向左滚动')}<div class="rail"><i></i></div>${chev('M4 2l5 5-5 5', '向右滚动')}</div>
  <div class="foot"></div>`;
});

define('sw-model', () => {
  const P = (c, d) => `<path fill="${c}" d="${d}"/>`;
  const grain = (id, d, t, f) => `<clipPath id="${id}"><path d="${d}"/></clipPath><g clip-path="url(#${id})"><rect transform="${t}" x="-400" y="-100" width="2000" height="1900" filter="url(#${f})" stroke="none"/></g>`;
  const top = 'url(#wood)', edge = '#9c7656', leg = '#a87e55', dark = '#5c3b31';
  return `<style>:host{display:block;width:420px;height:480px}svg{display:block}</style>
  <svg width="420" height="480" viewBox="0 0 1260 1440" role="img" aria-label="床头柜模型" stroke="#0b0b0b" stroke-width="3.500" stroke-linejoin="round">
  <defs>
   <linearGradient id="wood" x1=".4" y1="0" x2=".6" y2="1"><stop offset="0" stop-color="#de9f69"/><stop offset=".35" stop-color="#dfa26c"/><stop offset=".5" stop-color="#e1ae7c"/><stop offset=".65" stop-color="#dfa26c"/><stop offset="1" stop-color="#de9f69"/></linearGradient>
   <filter id="h" x="0" y="0" width="1" height="1" color-interpolation-filters="sRGB"><feTurbulence type="fractalNoise" baseFrequency=".006 .16" numOctaves="3" seed="4"/><feColorMatrix values="0 0 0 0 .78  0 0 0 0 .48  0 0 0 0 .26  1.300 0 0 0 -.5"/></filter>
   <filter id="v" x="0" y="0" width="1" height="1" color-interpolation-filters="sRGB"><feTurbulence type="fractalNoise" baseFrequency=".14 .006" numOctaves="3" seed="9"/><feColorMatrix values="0 0 0 0 .4  0 0 0 0 .23  0 0 0 0 .12  .9 0 0 0 -.36"/></filter>
  </defs>
  ${P(edge, 'M79 1034l42 22v38c-18 20-24 50-24 94l-24-11z')}${P(dark, 'M121 1056l59 30-59 8z')}${P(dark, 'M121 1094l59-8c-32 16-50 50-52 96l-31 6c0-44 6-74 24-94z')}
  ${P(edge, 'M1046 1150l44-8v40l-44-20z')}${P(leg, 'M1046 1162c30 18 50 60 51 112l21 8c0-50-8-80-28-100z')}${P(dark, 'M1090 1142l64-13-4 148-32 5c0-50-8-80-28-100z')}
  ${P(edge, 'M467 1229l43 20-2 147-23-9c-2-50-8-90-18-114z')}${P(dark, 'M510 1249l64-11v43c-24 30-34 60-36 108l-30 7z')}
  ${P(top, 'M80 1005 723 880l433 221-646 119z')}${grain('c1', 'M80 1005 723 880l433 221-646 119z', 'rotate(-10.500)', 'h')}
  ${P(edge, 'M80 1005l430 215v29L79 1034z')}${P(dark, 'M510 1220l646-119-2 28-644 120z')}
  ${P(edge, 'M93 620l16 8-12 380-17-5z')}${P(dark, 'M109 628l253 129-7 205-258 46z')}
  ${P(edge, 'M889 770l22-4-13 380-18-8z')}${P(dark, 'M911 766l257-47-12 381-258 46z')}
  ${grain('c2', 'M109 628l253 129-7 205-258 46zM911 766l257-47-12 381-258 46z', 'rotate(2)', 'v')}
  ${P(top, 'M94 589 712 474l456 216-644 117z')}${grain('c3', 'M94 589 712 474l456 216-644 117z', 'rotate(-10.500)', 'h')}
  ${P(edge, 'M94 589l430 218v31L94 620z')}${P(dark, 'M524 807l644-117v29L524 838z')}
  ${P(leg, 'M713 390l176-30-5 202-172-88z')}${P(dark, 'M889 360l27-5-6 201-26 6z')}
  ${P(leg, 'M365 340l173 87-14 376-171-85z')}${P(dark, 'M538 427l25-5-12 379-27 4z')}
  ${grain('c4', 'M713 390l176-30-5 202-172-88zM365 340l173 87-14 376-171-85z', 'rotate(2)', 'v')}
  ${P(top, 'M107 178 752 58l430 220-644 119z')}${grain('c5', 'M107 178 752 58l430 220-644 119z', 'rotate(-10.500)', 'h')}
  ${P(edge, 'M107 178l431 219v30L107 208z')}${P(dark, 'M538 397l644-119v29L538 427z')}
  </svg>`;
});

define('sw-triad', () => `<style>:host{display:block;width:120px;height:100px}svg{display:block}text{font:15px "Liberation Serif",serif}</style>
  <svg width="120" height="100" viewBox="0 0 120 100" role="img" aria-label="坐标轴">
  <path stroke="#0e4a12" stroke-width="5" d="M53 79 34 71"/><path fill="#0d5c14" d="M27 66l11-3 3 5-4 9-5-1z"/>
  <path stroke="#a31414" stroke-width="5" d="M53 80l28-6"/><path fill="#8e1414" d="M78 67l13 6-12 7z"/>
  <path stroke="#1a1ac0" stroke-width="5" d="M53 81V48"/><path fill="#2a2ad8" d="M54 36l7 13H47z"/>
  <text x="49" y="34" fill="#0000ff">Z</text><text x="19" y="69" fill="#008000">Y</text><text x="88" y="76" fill="#ff0000">X</text></svg>`);

define('sw-taskpane', () => `<style>${BTN}
  :host{display:flex;flex-direction:column;width:58px;box-sizing:border-box;border:1px solid #808080;border-right:0}
  button{height:54px;box-sizing:border-box;background:#d5d5d5;display:grid;place-items:center;border-bottom:1px solid #808080}
  button:last-child{border-bottom:0;height:53px}
  .on{background:#fff}
  </style>${[['home', '资源'], ['books', '设计库'], ['folderP', '文件探索器'], ['palette', '视图调色板'], ['ballPane', '外观'], ['props', '自定义属性'], ['chat', '论坛']].map(([i, l]) => `<button type="button" class="${i === 'ballPane' ? 'on' : ''}" aria-label="${l}"><sw-icon name="${i}"></sw-icon></button>`).join('')}`);

define('sw-viewport', () => `<style>${BTN}
  :host{display:block;position:relative;overflow:hidden;background:
   radial-gradient(ellipse 70% 62% at 8% 0,#fff 42%,rgba(255,255,255,0) 100%),
   radial-gradient(ellipse 24% 50% at 100% 0,rgba(247,247,249,.9) 0,rgba(255,255,255,0) 100%),
   radial-gradient(ellipse 45% 45% at 100% 100%,#eff0f3 0,rgba(255,255,255,0) 100%),
   linear-gradient(#e4e7ef 0,#dcdfea 45%,#e0e3ec 54%,#edeef3 60%,#f9f9fb 65%,#fefefe 72%,#fff 90%,#fcfcfd 100%)}
  .hud{position:absolute;top:35px;left:0;right:5px;display:flex;justify-content:center;opacity:.75;--tool-w:46px;--menu-w:20px}
  .win{position:absolute;top:2px;right:6px;display:flex;--tool-w:46px}
  sw-model{position:absolute;left:calc(50% - 347px);top:228px}
  sw-triad{position:absolute;left:7px;bottom:57px}
  sw-taskpane{position:absolute;right:0;top:84px}
  .handle{position:absolute;left:0;top:353px;width:13px;height:60px;box-sizing:border-box;border:1px solid #808080;border-left:0;background:#f7f7f7;display:grid;place-items:center start}
  .dot{width:8px;height:8px;border:1px solid #888;border-radius:50%;background:#ccc}
  </style>
  <sw-model></sw-model>
  <div class="hud">${[['zoomFit', '整屏显示全图'], ['zoomArea', '局部放大'], ['prevView', '上一视图'], ['section', '剖面视图'], ['orient', '视图定向', 1], ['display', '显示样式', 1], ['eye', '隐藏/显示', 1], ['appear', '编辑外观'], ['scene', '应用布景', 1], ['monitor', '视图设定', 1]].map(([i, l, m]) => `<sw-tool icon="${i}" label="${l}"${m ? ' menu="downGrey"' : ''}></sw-tool>`).join('')}</div>
  <div class="win">${[['paneL', '左窗格'], ['paneR', '右窗格'], ['minG', '最小化'], ['restoreG', '还原'], ['closeG', '关闭']].map(([i, l]) => `<sw-tool icon="${i}" label="${l}"></sw-tool>`).join('')}</div>
  <sw-triad></sw-triad><sw-taskpane></sw-taskpane>
  <button class="handle" type="button" aria-label="折叠面板"><span class="dot"></span></button>`);

define('sw-app', () => `<style>
  :host{display:flex;flex-direction:column;height:100vh;box-sizing:border-box;border-left:1px solid #000;background:#f7f7f7}
  main{flex:1;min-height:0;display:grid;grid-template:33px 1fr / 432px 1fr}
  sw-tabs{grid-area:1 / 1 / 2 / 3}
  sw-viewport{grid-area:1 / 2 / 3 / 3}
  sw-panel{grid-area:2 / 1 / 3 / 2}
  </style>
  <sw-titlebar></sw-titlebar><sw-ribbon></sw-ribbon>
  <main><sw-viewport></sw-viewport><sw-panel></sw-panel><sw-tabs></sw-tabs></main>`);
</script>
</body>
</html>
